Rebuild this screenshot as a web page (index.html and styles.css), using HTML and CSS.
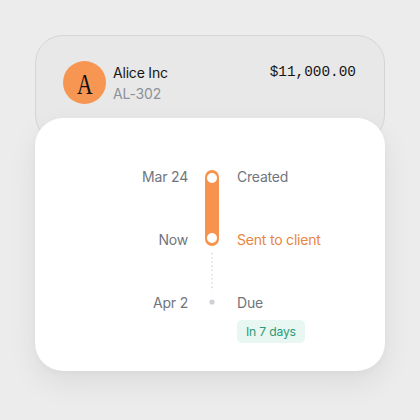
FILE: index.html
```html
<!DOCTYPE html>
<html>
<head>
<meta charset="utf-8">
<link rel="stylesheet" href="styles.css">
</head>
<body>
<div class="stage">
  <div class="invoice">
    <div class="avatar"><span class="initial">A</span></div>
    <div class="client">
      <div class="name">Alice Inc</div>
      <div class="code">AL-302</div>
    </div>
    <div class="amount">$11,000.00</div>
  </div>
  <div class="card">
    <div class="timeline">
      <div class="date r1">Mar 24</div>
      <svg class="track" width="16" height="145" viewBox="0 0 16 145">
        <rect x="1" y="3" width="14" height="76" rx="7" fill="#f7924f"/>
        <circle cx="8" cy="11" r="5" fill="#fff"/>
        <circle cx="8" cy="71" r="5" fill="#fff"/>
        <line x1="8" y1="86" x2="8" y2="124" stroke="#cfd1d6" stroke-width="1.3" stroke-dasharray="1.3 2.9"/>
        <circle cx="8" cy="135" r="2.6" fill="#cdd0d5"/>
      </svg>
      <div class="event r1">Created</div>
      <div class="date r2">Now</div>
      <div class="event r2 active">Sent to client</div>
      <div class="date r3">Apr 2</div>
      <div class="event r3">
        <span>Due</span>
        <span class="badge">In 7 days</span>
      </div>
    </div>
  </div>
</div>
</body>
</html>
```
FILE: styles.css
```css
html, body {
  margin: 0;
  padding: 0;
  background: #ececec;
  font-family: Inter, "Noto Sans", sans-serif;
}
.stage {
  padding: 35px;
  width: 350px;
}
.invoice {
  box-sizing: border-box;
  height: 108px;
  background: #e8e8e8;
  border: 1px solid #d5d5d5;
  border-radius: 28px;
  display: flex;
  align-items: flex-start;
  padding: 25px 28px 0 27px;
}
.avatar {
  width: 43px;
  height: 43px;
  border-radius: 50%;
  background: #f79553;
  color: #111;
  display: flex;
  align-items: center;
  justify-content: center;
  flex: none;
}
.initial {
  font-family: "Liberation Serif", serif;
  font-size: 30px;
  line-height: 30px;
  display: inline-block;
  transform: scaleX(0.72);
  margin-top: 2px;
}
.client {
  margin-left: 7px;
  margin-top: 1px;
  flex: 1;
  letter-spacing: -0.2px;
}
.name {
  font-size: 14px;
  line-height: 21px;
  color: #161616;
}
.code {
  font-size: 14px;
  line-height: 21px;
  color: #8d9199;
}
.amount {
  font-family: "Liberation Mono", monospace;
  font-size: 14.4px;
  line-height: 21px;
  margin-top: 1px;
  color: #161616;
}
.card {
  position: relative;
  margin-top: -25px;
  background: #fff;
  border-radius: 28px;
  box-shadow: 0 12px 30px rgba(0, 0, 0, 0.07), 0 2px 6px rgba(0, 0, 0, 0.03);
  padding: 49px 4px 28px 8px;
}
.timeline {
  display: grid;
  grid-template-columns: 1fr 16px 1fr;
  grid-template-rows: 20px 20px auto;
  column-gap: 16px;
  row-gap: 43px;
  letter-spacing: -0.2px;
}
.track {
  grid-column: 2;
  grid-row: 1 / 4;
  align-self: start;
  display: block;
}
.date {
  grid-column: 1;
  text-align: right;
  font-size: 14px;
  line-height: 20px;
  color: #70757d;
}
.event {
  grid-column: 3;
  font-size: 14px;
  line-height: 20px;
  color: #70757d;
  padding-left: 1px;
}
.r1 { grid-row: 1; }
.r2 { grid-row: 2; }
.r3 { grid-row: 3; }
.active { color: #e8853f; }
.event.r3 {
  display: flex;
  flex-direction: column;
  align-items: flex-start;
}
.badge {
  margin-top: 7px;
  background: #e8f7f1;
  color: #2b9a76;
  font-size: 12.2px;
  line-height: 23px;
  padding: 0 9px;
  border-radius: 5px;
}
```
